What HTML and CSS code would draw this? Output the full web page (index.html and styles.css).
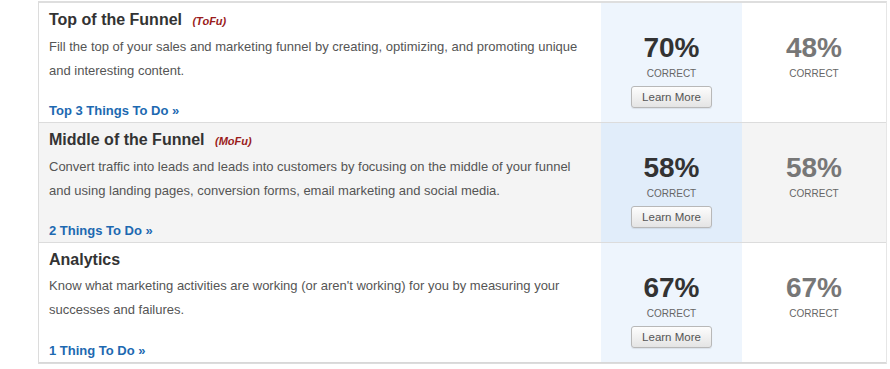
FILE: index.html
```html
<!DOCTYPE html>
<html>
<head>
<meta charset="utf-8">
<link rel="stylesheet" href="styles.css">
</head>
<body>
<div class="table">
  <div class="row">
    <div class="info">
      <div class="title">Top of the Funnel <span class="tag">(ToFu)</span></div>
      <p class="desc">Fill the top of your sales and marketing funnel by creating, optimizing, and promoting unique and interesting content.</p>
      <a class="todo" href="#">Top 3 Things To Do »</a>
    </div>
    <div class="score mine">
      <div class="pct">70%</div>
      <div class="lbl">CORRECT</div>
      <button class="btn">Learn More</button>
    </div>
    <div class="score avg">
      <div class="pct">48%</div>
      <div class="lbl">CORRECT</div>
    </div>
  </div>
  <div class="row alt">
    <div class="info">
      <div class="title">Middle of the Funnel <span class="tag">(MoFu)</span></div>
      <p class="desc">Convert traffic into leads and leads into customers by focusing on the middle of your funnel and using landing pages, conversion forms, email marketing and social media.</p>
      <a class="todo" href="#">2 Things To Do »</a>
    </div>
    <div class="score mine">
      <div class="pct">58%</div>
      <div class="lbl">CORRECT</div>
      <button class="btn">Learn More</button>
    </div>
    <div class="score avg">
      <div class="pct">58%</div>
      <div class="lbl">CORRECT</div>
    </div>
  </div>
  <div class="row">
    <div class="info">
      <div class="title">Analytics</div>
      <p class="desc">Know what marketing activities are working (or aren't working) for you by measuring your successes and failures.</p>
      <a class="todo" href="#">1 Thing To Do »</a>
    </div>
    <div class="score mine">
      <div class="pct">67%</div>
      <div class="lbl">CORRECT</div>
      <button class="btn">Learn More</button>
    </div>
    <div class="score avg">
      <div class="pct">67%</div>
      <div class="lbl">CORRECT</div>
    </div>
  </div>
</div>
</body>
</html>
```
FILE: styles.css
```css
html, body {
  margin: 0;
  padding: 0;
  background: #fff;
  font-family: "Liberation Sans", Arial, sans-serif;
}
.table {
  margin: 1px 0 0 38px;
  width: 849px;
  box-sizing: border-box;
  border-top: 2px solid #dedede;
  border-left: 1px solid #dcdcdc;
  border-right: 1px solid #e6e6e6;
  border-bottom: 1px solid #dcdcdc;
}
.row {
  display: grid;
  grid-template-columns: 562px 141px 144px;
  height: 119px;
  border-bottom: 1px solid #dcdcdc;
  background: #fff;
}
.row:last-child {
  border-bottom: 1px solid #d8d8d8;
}
.row.alt {
  background: #f4f4f4;
}
.info {
  display: flex;
  flex-direction: column;
  padding: 7px 10px 3px 10px;
}
.title {
  font-size: 16px;
  font-weight: bold;
  line-height: 20px;
  color: #333;
}
.tag {
  font-size: 11px;
  font-style: italic;
  font-weight: bold;
  color: #9a1c1c;
  margin-left: 6px;
}
.desc {
  margin: 4px 0 0 0;
  font-size: 13px;
  line-height: 24px;
  color: #555;
}
.todo {
  margin-top: auto;
  font-size: 13px;
  font-weight: bold;
  line-height: 16px;
  color: #1d69b1;
  text-decoration: none;
}
.score {
  display: flex;
  flex-direction: column;
  align-items: center;
  padding-top: 29px;
}
.mine {
  background: #eef5fd;
}
.row.alt .mine {
  background: #e1edfa;
}
.pct {
  font-size: 28px;
  font-weight: bold;
  line-height: 32px;
  color: #333;
}
.avg .pct {
  color: #777;
}
.lbl {
  margin-top: 4px;
  font-size: 10px;
  line-height: 12px;
  color: #666;
}
.btn {
  margin-top: 6px;
  width: 81px;
  height: 22px;
  padding: 0;
  border: 1px solid #b8b8b8;
  border-radius: 3px;
  background: linear-gradient(#fdfdfd, #e4e4e4);
  box-shadow: 0 1px 1px rgba(0,0,0,0.08);
  font-family: "Liberation Sans", Arial, sans-serif;
  font-size: 11.5px;
  color: #555;
}
```
